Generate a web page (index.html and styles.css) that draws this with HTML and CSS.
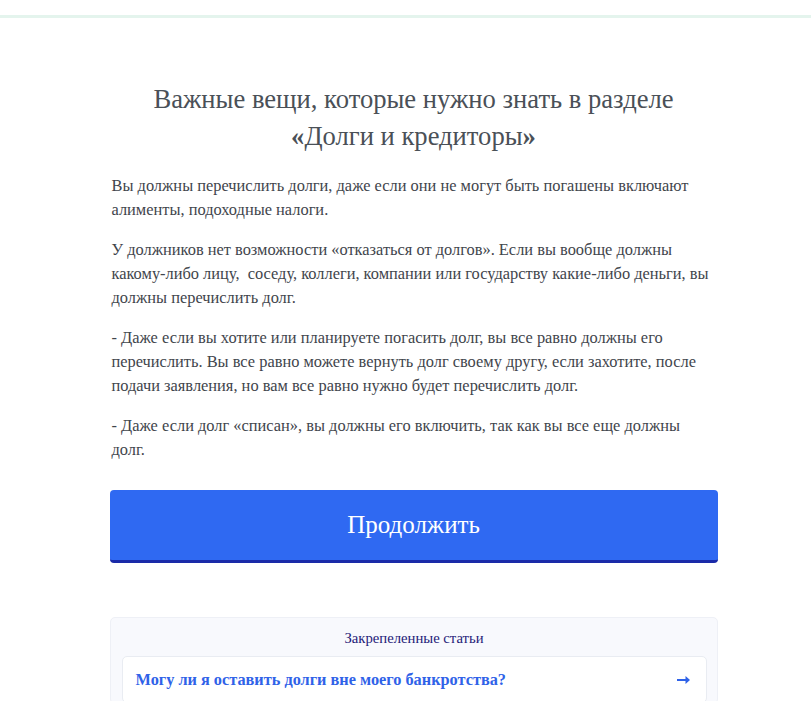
FILE: index.html
```html
<!DOCTYPE html>
<html lang="ru">
<head>
    <meta charset="UTF-8">
    <meta name="viewport" content="width=device-width, initial-scale=1.0">
    <title>Долги и кредиторы</title>
    <link rel="stylesheet" href="styles.css">
</head>
<body>
    <div class="topbar"></div>

    <main class="container">
        <h1>Важные вещи, которые нужно знать в разделе <b>«</b>Долги и кредиторы<b>»</b></h1>

        <p>Вы должны перечислить долги, даже если они не могут быть погашены включают алименты, подоходные налоги.</p>
        <p>У должников нет возможности «отказаться от долгов». Если вы вообще должны какому-либо лицу,&nbsp; соседу, коллеги, компании или государству какие-либо деньги, вы должны перечислить долг.</p>
        <p>- Даже если вы хотите или планируете погасить долг, вы все равно должны его перечислить. Вы все равно можете вернуть долг своему другу, если захотите, после подачи заявления, но вам все равно нужно будет перечислить долг.</p>
        <p>- Даже если долг «списан», вы должны его включить, так как вы все еще должны долг.</p>

        <button type="button" class="continue">Продолжить</button>

        <section class="pinned">
            <div class="pinned-title">Закрепеленные статьи</div>
            <a href="#" class="pinned-item">
                <span>Могу ли я оставить долги вне моего банкротства?</span>
                <svg width="14" height="10" viewBox="0 0 14 10" aria-hidden="true">
                    <path d="M0 5h10" stroke="#2f62e8" stroke-width="2"/>
                    <path d="M8.5 1l4.5 4-4.5 4z" fill="#2f62e8"/>
                </svg>
            </a>
        </section>
    </main>
</body>
</html>
```

FILE: styles.css
```css
body {
    margin: 0;
    padding: 0 0 0 16px;
    background: #fff;
    font-family: 'Liberation Serif', 'Times New Roman', serif;
    color: #3f454c;
}

.topbar {
    height: 15px;
    margin-left: -16px;
    border-bottom: 3px solid #e4f4ed;
}

.container {
    max-width: 608px;
    margin: 0 auto;
    padding-top: 63px;
}

h1 {
    margin: 0 0 19px;
    font-size: 26.6px;
    font-weight: normal;
    line-height: 37px;
    text-align: center;
    color: #4a5057;
}

p {
    margin: 0 0 16px;
    padding-left: 2px;
    font-size: 16.4px;
    line-height: 24px;
}

.continue {
    display: block;
    width: 100%;
    height: 73px;
    margin-top: 28px;
    border: none;
    border-bottom: 3px solid #1a2aa8;
    border-radius: 4px;
    background-color: #2f69f2;
    color: #fff;
    font-family: inherit;
    font-size: 25px;
    cursor: pointer;
}

.pinned {
    margin-top: 54px;
    padding: 10px 10px 0 11px;
    background: #f8f9fd;
    border: 1px solid #eef0f6;
    border-radius: 5px;
}

.pinned-title {
    font-size: 14.7px;
    line-height: 20px;
    text-align: center;
    color: #1f2178;
    margin-bottom: 8px;
}

.pinned-item {
    display: flex;
    align-items: center;
    justify-content: space-between;
    padding: 13px 15px 12px 13px;
    background: #fff;
    border: 1px solid #e9ecf2;
    border-radius: 5px;
    text-decoration: none;
    color: #2f62e8;
    font-size: 16.3px;
    font-weight: bold;
}
```
